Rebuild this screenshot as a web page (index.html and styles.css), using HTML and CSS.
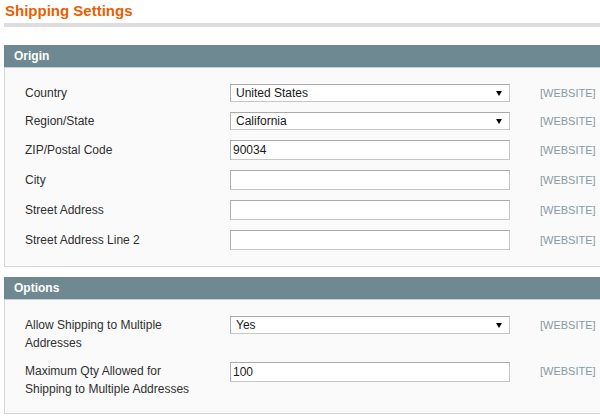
FILE: index.html
```
<!DOCTYPE html>
<html>
<head>
<meta charset="utf-8">
<link rel="stylesheet" href="styles.css">
</head>
<body>
<div class="page">
  <div class="title-bar">
    <h3 class="title">Shipping Settings</h3>
  </div>

  <div class="section">
    <div class="section-head">Origin</div>
    <div class="section-body">
      <div class="row">
        <label class="label">Country</label>
        <div class="value"><span class="select-wrap"><select class="select"><option>United States</option></select></span></div>
        <div class="scope">[WEBSITE]</div>
      </div>
      <div class="row">
        <label class="label">Region/State</label>
        <div class="value"><span class="select-wrap"><select class="select"><option>California</option></select></span></div>
        <div class="scope">[WEBSITE]</div>
      </div>
      <div class="row">
        <label class="label">ZIP/Postal Code</label>
        <div class="value"><input class="input" type="text" value="90034"></div>
        <div class="scope">[WEBSITE]</div>
      </div>
      <div class="row">
        <label class="label">City</label>
        <div class="value"><input class="input" type="text" value=""></div>
        <div class="scope">[WEBSITE]</div>
      </div>
      <div class="row">
        <label class="label">Street Address</label>
        <div class="value"><input class="input" type="text" value=""></div>
        <div class="scope">[WEBSITE]</div>
      </div>
      <div class="row">
        <label class="label">Street Address Line 2</label>
        <div class="value"><input class="input" type="text" value=""></div>
        <div class="scope">[WEBSITE]</div>
      </div>
    </div>
  </div>

  <div class="section">
    <div class="section-head">Options</div>
    <div class="section-body options">
      <div class="row top">
        <label class="label">Allow Shipping to Multiple Addresses</label>
        <div class="value"><span class="select-wrap"><select class="select"><option>Yes</option></select></span></div>
        <div class="scope">[WEBSITE]</div>
      </div>
      <div class="row top">
        <label class="label">Maximum Qty Allowed for Shipping to Multiple Addresses</label>
        <div class="value"><input class="input" type="text" value="100"></div>
        <div class="scope">[WEBSITE]</div>
      </div>
    </div>
  </div>
</div>
</body>
</html>
```

FILE: styles.css
```
html, body {
  margin: 0;
  padding: 0;
  background: #ffffff;
}

body {
  font-family: Arial, "Liberation Sans", sans-serif;
  font-size: 12px;
  color: #2f2f2f;
}

.page {
  width: 596px;
  margin-left: 4px;
}

.title-bar {
  border-bottom: 4px solid #dddddd;
  padding: 1px 0 0 1px;
  height: 27px;
  box-sizing: border-box;
}

.title {
  margin: 0;
  font-size: 15px;
  line-height: 19px;
  font-weight: bold;
  color: #eb5e00;
}

.section {
  margin-top: 18px;
}

.section + .section {
  margin-top: 10px;
}

.section-head {
  height: 22px;
  line-height: 22px;
  background: #6f8992;
  color: #ffffff;
  font-weight: bold;
  font-size: 12px;
  padding-left: 10px;
  border-bottom: 1px solid #c7d1d5;
}

.section-body {
  background: #fafafa;
  border: 1px solid #d6d6d6;
  border-top: none;
  border-right: none;
  padding: 11px 0 11px 0;
}

.section-body.options {
  padding: 11px 0 10px 0;
}

.row {
  display: flex;
  align-items: center;
  padding: 5px 0;
}

.row.top {
  align-items: flex-start;
}

.label {
  width: 185px;
  padding-left: 20px;
  margin-right: 20px;
  line-height: 18px;
  flex: none;
}

.value {
  width: 280px;
  flex: none;
}

.scope {
  margin-left: 30px;
  font-size: 11px;
  color: #8799a5;
  line-height: 18px;
  white-space: nowrap;
}

.input,
.select {
  box-sizing: border-box;
  width: 280px;
  margin: 0;
  font-family: Arial, "Liberation Sans", sans-serif;
  font-size: 12px;
  color: #1a1a1a;
  background: #ffffff;
  border: 1px solid #c6c6c6;
  border-top-color: #a9a9a9;
  border-left-color: #b0b0b0;
  border-radius: 0;
  outline: none;
  display: block;
}

.input {
  height: 20px;
  padding: 0 2px;
}

.select {
  height: 18px;
  padding: 0 0 0 5px;
  -webkit-appearance: none;
  appearance: none;
  line-height: 16px;
}

.select-wrap {
  position: relative;
  display: block;
  width: 280px;
}

.select-wrap::after {
  content: "";
  position: absolute;
  right: 8px;
  top: 7px;
  width: 0;
  height: 0;
  border-left: 3px solid transparent;
  border-right: 3px solid transparent;
  border-top: 5px solid #000000;
  pointer-events: none;
}
```
